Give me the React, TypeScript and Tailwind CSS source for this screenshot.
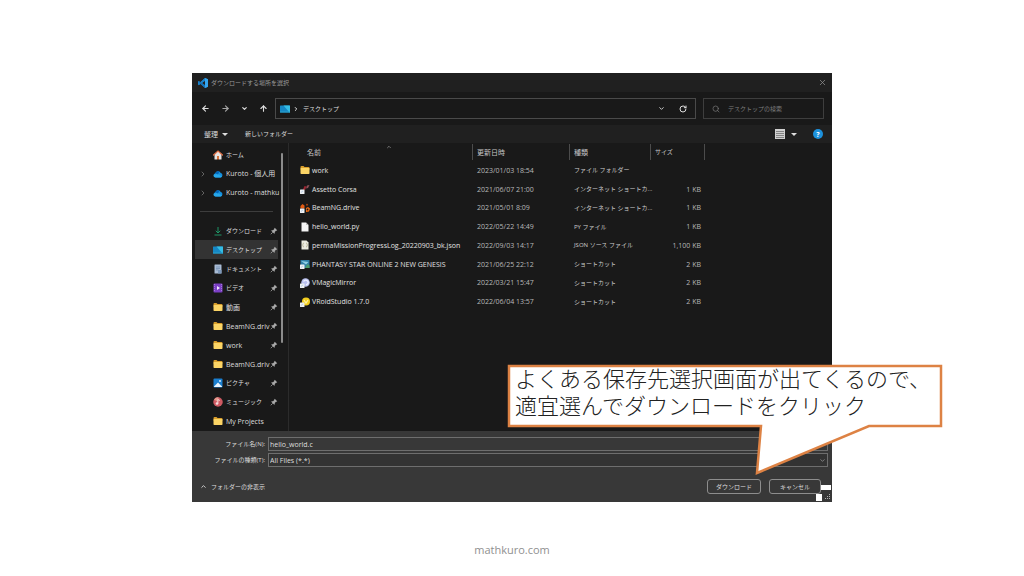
import { ReactNode } from 'react';
import {
  ArrowLeft,
  ArrowRight,
  ArrowUp,
  ChevronDown,
  ChevronRight,
  ChevronUp,
  RotateCw,
  Search,
  X,
} from 'lucide-react';

/* ---------- Icons ---------- */

function Svg({ children }: { children: ReactNode }) {
  return (
    <svg viewBox="0 0 20 20" className="size-[10px] shrink-0" aria-hidden="true">
      {children}
    </svg>
  );
}

const FolderIcon = () => (
  <Svg>
    <path d="M1 4q0-2 2-2h4l2 2h8q2 0 2 2v3H1z" fill="#d99e2b" />
    <rect x="1" y="6" width="18" height="12" rx="1.5" fill="#fbd465" />
  </Svg>
);

const HomeIcon = () => (
  <Svg>
    <path d="M3 9l7-7 7 7v10h-5v-6H8v6H3z" fill="#e8e4e2" />
    <path d="M8 12h4v7H8z" fill="#d9733c" />
    <path d="M1 10l9-8 9 8" fill="none" stroke="#e2734a" strokeWidth="2.4" strokeLinecap="round" />
  </Svg>
);

const CloudIcon = () => (
  <Svg>
    <path d="M5 17a4.500 4.500 0 0 1-.5-8.500A6 6 0 0 1 15.500 8 4.600 4.600 0 0 1 15 17z" fill="#1490df" />
    <path d="M5 17a4.500 4.500 0 0 1-3.500-6L10 10l8 5q-1 2-3 2z" fill="#28a8ea" />
    <path d="M4.500 8.500A6 6 0 0 1 13 5l-3 6z" fill="#0364b8" />
  </Svg>
);

const DownloadIcon = () => (
  <Svg>
    <path d="M10 2v12M5.500 9.500L10 14l4.500-4.500M3 18h14" fill="none" stroke="#1fa36f" strokeWidth="1.8" />
  </Svg>
);

const DesktopIcon = () => (
  <Svg>
    <rect x="0" y="3" width="20" height="14" rx="1" fill="#1687c4" />
    <path d="M7 3h12q1 0 1 1v12q0 1-1 1z" fill="#35bde4" />
    <path d="M0 15h20v1q0 1-1 1H1q-1 0-1-1z" fill="#2aa1cc" />
  </Svg>
);

const DocumentIcon = () => (
  <Svg>
    <rect x="3" y="1" width="14" height="18" rx="1" fill="#a9bcd4" />
    <path d="M6 6h8M6 9h8M6 12h5" stroke="#6f8bb0" strokeWidth="1.4" />
    <rect x="10" y="12" width="7" height="7" fill="#7d98ba" />
  </Svg>
);

const VideoIcon = () => (
  <Svg>
    <rect x="1" y="1" width="18" height="18" rx="2" fill="#7b3fc4" />
    <path d="M3 2v16M17 2v16" stroke="#b58be6" strokeWidth="1.5" strokeDasharray="2 2" />
    <path d="M8 6l6 4-6 4z" fill="#f1e6ff" />
  </Svg>
);

const PictureIcon = () => (
  <Svg>
    <rect x="1" y="1" width="18" height="18" rx="2" fill="#1a7fd0" />
    <path d="M2 17l8-8 8 8v1H2z" fill="#e9f5ff" />
    <circle cx="14" cy="6" r="1.8" fill="#e9f5ff" />
  </Svg>
);

const MusicIcon = () => (
  <Svg>
    <circle cx="10" cy="10" r="9.500" fill="#cf5a63" />
    <path d="M10 10L2 5a9.500 9.500 0 0 1 9-4.500z" fill="#e59a8d" />
    <circle cx="8" cy="13" r="2.600" fill="#f5dcdc" />
    <path d="M9.800 13V5l4 2" fill="none" stroke="#f5dcdc" strokeWidth="1.8" />
  </Svg>
);

const ShortcutBadge = () => (
  <>
    <rect x="0" y="11" width="9" height="9" rx="1" fill="#eef1f4" />
    <path d="M2.500 17.500q0-3 4-3.500" fill="none" stroke="#9dbbdc" strokeWidth="1.3" />
  </>
);

const AssettoIcon = () => (
  <Svg>
    <path d="M6 11l3-7 4 1-3 7z" fill="#9b2430" />
    <path d="M12 9l2-6 5-1-3 6z" fill="#8d5158" />
    <ShortcutBadge />
  </Svg>
);

const BeamIcon = () => (
  <Svg>
    <path d="M1 6l4-4 4 3v6H1z" fill="#e25b12" />
    <circle cx="14" cy="3.500" r="2" fill="#9c3f12" />
    <path d="M12 10l4-2 4 3-2 6-6 1z" fill="#f06a12" />
    <circle cx="15" cy="13" r="1.800" fill="#191919" />
    <ShortcutBadge />
  </Svg>
);

const FileIcon = () => (
  <Svg>
    <path d="M3 1h9l5 5v13H3z" fill="#f4f4f4" />
    <path d="M12 1v5h5z" fill="#bdbdbd" />
  </Svg>
);

const JsonIcon = () => (
  <Svg>
    <path d="M3 1h10l4 4v14H3z" fill="#ecebe0" />
    <path d="M8 6q-2 0-2 2 0 2-1 2 1 0 1 2t2 2M12 6q2 0 2 2 0 2 1 2-1 0-1 2t-2 2" fill="none" stroke="#a8a483" strokeWidth="1.5" />
  </Svg>
);

const PhantasyIcon = () => (
  <Svg>
    <rect x="1" y="2" width="18" height="16" fill="#2f7fa8" />
    <path d="M2 4l15 2-5 5z" fill="#8fd0e6" />
    <path d="M10 18l5-8 4 3v5z" fill="#4d9c6b" />
    <ShortcutBadge />
  </Svg>
);

const MirrorIcon = () => (
  <Svg>
    <circle cx="11" cy="9" r="8.500" fill="#b9c0ee" />
    <path d="M7 7q4-5 8-1t-3 8" fill="none" stroke="#eef0ff" strokeWidth="2.500" />
    <ShortcutBadge />
  </Svg>
);

const VroidIcon = () => (
  <Svg>
    <circle cx="12" cy="9" r="8" fill="#f4cf1f" />
    <path d="M8 6l4 6 4-6" fill="none" stroke="#fff3a8" strokeWidth="2.500" />
    <ShortcutBadge />
  </Svg>
);

const PinIcon = () => (
  <svg viewBox="0 0 16 16" className="size-2 shrink-0" aria-hidden="true">
    <path d="M9.500 1.500l5 5-1.500 1-1 0-2.500 2.500 0 2.500-1 1L2.500 7.500l1-1H6L8.500 4V3z" fill="#a9a9a9" />
    <path d="M5.500 10.500L1.500 14.500" stroke="#a9a9a9" strokeWidth="1.5" />
  </svg>
);

const CodeLogo = () => (
  <Svg>
    <path d="M14 0l6 2.500v15L14 20 4.500 11.500 1.500 14 0 13V7l1.500-1 3 2.500z" fill="#1b82cb" />
    <path d="M14 5.500v9L8 10z" fill="#202020" />
    <path d="M14 0L0 13l1.500 1.300L14 5.500z" fill="#1b82cb" />
    <path d="M1.500 5.800L0 7l14 13v-5.500z" fill="#1572b8" />
    <path d="M14 0l6 2.500v15L14 20z" fill="#35a5ee" />
  </Svg>
);

/* ---------- Data ---------- */

type Place = {
  label: string;
  icon: ReactNode;
  pinned?: boolean;
  expandable?: boolean;
  selected?: boolean;
  kana?: boolean;
};

const topPlaces: Place[] = [
  { label: 'ホーム', icon: <HomeIcon />, kana: true },
  { label: 'Kuroto - 個人用', icon: <CloudIcon />, expandable: true },
  { label: 'Kuroto - mathku', icon: <CloudIcon />, expandable: true },
];

const pinnedPlaces: Place[] = [
  { label: 'ダウンロード', icon: <DownloadIcon />, pinned: true, kana: true },
  { label: 'デスクトップ', icon: <DesktopIcon />, pinned: true, selected: true, kana: true },
  { label: 'ドキュメント', icon: <DocumentIcon />, pinned: true, kana: true },
  { label: 'ビデオ', icon: <VideoIcon />, pinned: true, kana: true },
  { label: '動画', icon: <FolderIcon />, pinned: true },
  { label: 'BeamNG.driv', icon: <FolderIcon />, pinned: true },
  { label: 'work', icon: <FolderIcon />, pinned: true },
  { label: 'BeamNG.driv', icon: <FolderIcon />, pinned: true },
  { label: 'ピクチャ', icon: <PictureIcon />, pinned: true, kana: true },
  { label: 'ミュージック', icon: <MusicIcon />, pinned: true, kana: true },
  { label: 'My Projects', icon: <FolderIcon /> },
];

const files = [
  { name: 'work', icon: <FolderIcon />, date: '2023/01/03 18:54', type: 'ファイル フォルダー', size: '' },
  { name: 'Assetto Corsa', icon: <AssettoIcon />, date: '2021/06/07 21:00', type: 'インターネット ショートカ...', size: '1 KB' },
  { name: 'BeamNG.drive', icon: <BeamIcon />, date: '2021/05/01 8:09', type: 'インターネット ショートカ...', size: '1 KB' },
  { name: 'hello_world.py', icon: <FileIcon />, date: '2022/05/22 14:49', type: 'PY ファイル', size: '1 KB' },
  { name: 'permaMissionProgressLog_20220903_bk.json', icon: <JsonIcon />, date: '2022/09/03 14:17', type: 'JSON ソース ファイル', size: '1,100 KB' },
  { name: 'PHANTASY STAR ONLINE 2 NEW GENESIS', icon: <PhantasyIcon />, date: '2021/06/25 22:12', type: 'ショートカット', size: '2 KB' },
  { name: 'VMagicMirror', icon: <MirrorIcon />, date: '2022/03/21 15:47', type: 'ショートカット', size: '2 KB' },
  { name: 'VRoidStudio 1.7.0', icon: <VroidIcon />, date: '2022/06/04 13:57', type: 'ショートカット', size: '2 KB' },
];

/* ---------- Sections ---------- */

function PlaceItem({ label, icon, pinned, expandable, selected, kana }: Place) {
  return (
    <li className="flex min-h-0 flex-1">
      <button
        className={`flex w-full items-center pl-2 text-left ${selected ? 'bg-[#333333]' : ''}`}
      >
        <span className="w-[10px] shrink-0">
          {expandable && <ChevronRight className="-ml-1 size-2 text-[#8a8a8a]" />}
        </span>
        {icon}
        <span
          className={`ml-[3px] flex-1 whitespace-nowrap ${kana ? 'text-[6px]' : 'text-[7px]'}`}
        >
          {label}
        </span>
        {pinned && <PinIcon />}
      </button>
    </li>
  );
}

function Sidebar() {
  return (
    <aside className="flex w-[97px] shrink-0 border-r border-[#2b2b2b] pl-[3px]">
      <ul className="flex w-[83px] shrink-0 flex-col pt-[2px]">
        {topPlaces.map((place) => (
          <PlaceItem key={place.label} {...place} />
        ))}
        <li className="flex min-h-0 flex-1 items-center px-[5px]">
          <hr className="w-full border-[#3d3d3d]" />
        </li>
        {pinnedPlaces.map((place, i) => (
          <PlaceItem key={i} {...place} />
        ))}
      </ul>
      <div className="mt-[10px] ml-[3px] h-[190px] w-[2px] rounded-full bg-[#8c8c8c]" />
    </aside>
  );
}

function FileTable() {
  return (
    <div className="min-w-0 flex-1">
      <table className="h-[168px] w-full table-fixed border-collapse text-left whitespace-nowrap">
        <colgroup>
          <col className="w-[184px]" />
          <col className="w-[97px]" />
          <col className="w-[81px]" />
          <col className="w-[54px]" />
          <col />
        </colgroup>
        <thead className="text-[7px] text-[#c4c4c4]">
          <tr className="h-[18px]">
            <th className="p-0 font-normal">
              <div className="flex h-4 items-center border-r border-[#4c4c4c] pl-[18px]">
                <span className="flex-1">名前</span>
                <ChevronUp className="mr-20 size-[6px] self-start" />
              </div>
            </th>
            <th className="p-0 font-normal">
              <div className="flex h-4 items-center border-r border-[#4c4c4c] pl-1">更新日時</div>
            </th>
            <th className="p-0 font-normal">
              <div className="flex h-4 items-center border-r border-[#4c4c4c] pl-1">種類</div>
            </th>
            <th className="p-0 font-normal">
              <div className="flex h-4 items-center border-r border-[#4c4c4c] pl-1 text-[6px]">サイズ</div>
            </th>
            <th className="p-0" />
          </tr>
        </thead>
        <tbody className="text-[7px] text-[#b8b8b8]">
          {files.map((file) => (
            <tr key={file.name}>
              <td className="p-0 text-[#e2e2e2]">
                <div className="flex items-center gap-[2px] pl-[11px]">
                  {file.icon}
                  <span>{file.name}</span>
                </div>
              </td>
              <td className="p-0 pl-1">{file.date}</td>
              <td className="p-0 pl-1 text-[6px] text-[#cccccc]">{file.type}</td>
              <td className="p-0 pr-1 text-right">{file.size}</td>
              <td className="p-0" />
            </tr>
          ))}
        </tbody>
      </table>
    </div>
  );
}

function Callout() {
  return (
    <div className="absolute top-[291px] left-[315px] w-[436px]">
      <svg viewBox="0 0 436 112" className="block w-full" aria-hidden="true">
        <path
          d="M2 2H434V62H362L250 109L254 62H2Z"
          fill="#ffffff"
          stroke="#dd8244"
          strokeWidth="2.5"
          strokeLinejoin="miter"
        />
      </svg>
      <p className="absolute top-px left-2 text-[22px] leading-[27px] font-light whitespace-nowrap text-[#222222]">
        よくある保存先選択画面が出てくるので、
        <br />
        適宜選んでダウンロードをクリック
      </p>
    </div>
  );
}

export default function App() {
  return (
    <div className="flex min-h-screen flex-col items-center bg-white px-4 pt-[73px] font-['Open_Sans','Noto_Sans_CJK_JP',sans-serif] leading-none">
      <main className="relative w-full max-w-[640px] bg-[#191919] text-[7px] text-[#dedede]">
        {/* Title bar */}
        <header className="flex h-[19px] items-center bg-[#202020] pr-[5px] pl-[6px]">
          <CodeLogo />
          <h1 className="ml-[3px] flex-1 text-[6px] text-[#9a9a9a]">ダウンロードする場所を選択</h1>
          <button aria-label="閉じる">
            <X className="size-[9px] text-[#8f8f8f]" strokeWidth={2} />
          </button>
        </header>

        {/* Navigation */}
        <div className="flex h-[33px] items-center pr-2 pl-[9px]">
          <nav className="flex w-[74px] items-center gap-[11px]">
            <button aria-label="戻る">
              <ArrowLeft className="size-[9px]" strokeWidth={3} />
            </button>
            <button aria-label="進む">
              <ArrowRight className="size-[9px] text-[#a5a5a5]" strokeWidth={3} />
            </button>
            <button aria-label="履歴">
              <ChevronDown className="size-[7px]" strokeWidth={4} />
            </button>
            <button aria-label="上へ">
              <ArrowUp className="size-[9px]" strokeWidth={3} />
            </button>
          </nav>
          <div className="flex h-[21px] flex-1 items-center border border-[#4a4a4a] pr-2 pl-1">
            <DesktopIcon />
            <ChevronRight className="ml-[3px] size-[6px]" strokeWidth={4} />
            <button className="ml-1 text-[6px]">デスクトップ</button>
            <button className="ml-auto" aria-label="以前の場所">
              <ChevronDown className="size-[7px]" strokeWidth={3} />
            </button>
            <button className="ml-[14px]" aria-label="更新">
              <RotateCw className="size-2" strokeWidth={3} />
            </button>
          </div>
          <label className="ml-[7px] flex h-[21px] w-[121px] items-center border border-[#3e3e3e] pl-2">
            <Search className="size-2 shrink-0 text-[#7d7d7d]" strokeWidth={2} />
            <input
              className="ml-2 w-full min-w-0 bg-transparent text-[6px] outline-none placeholder:text-[#7d7d7d]"
              placeholder="デスクトップの検索"
              aria-label="デスクトップの検索"
            />
          </label>
        </div>

        {/* Toolbar */}
        <div className="flex h-[18px] items-center bg-[#202020] pr-[9px] pl-3">
          <button className="flex items-center gap-1">
            整理
            <span className="border-x-[3px] border-t-[3px] border-x-transparent border-t-[#dedede]" />
          </button>
          <button className="ml-[17px] text-[6px]">新しいフォルダー</button>
          <button className="ml-auto flex items-center gap-[6px]" aria-label="表示方法">
            <Svg>
              <rect x="0" y="0" width="20" height="20" fill="#d0d0d0" />
              <path d="M2 5h16M2 9h16M2 13h16M2 17h16" stroke="#6b6b6b" strokeWidth="1.5" />
            </Svg>
            <span className="border-x-[3px] border-t-[3px] border-x-transparent border-t-[#dedede]" />
          </button>
          <button
            className="ml-4 flex size-[10px] items-center justify-center rounded-full bg-[#1c91dc] text-[7px] font-bold text-white"
            aria-label="ヘルプ"
          >
            ?
          </button>
        </div>

        <div className="flex h-72">
          <Sidebar />
          <FileTable />
        </div>

        {/* File name, type and actions */}
        <footer className="bg-[#383838] pt-[6px] pr-1 pb-2 pl-2">
          <div className="grid grid-cols-[65px_1fr] items-center gap-x-[3px] gap-y-[2px]">
            <label htmlFor="file-name" className="text-right text-[6px]">
              ファイル名(N):
            </label>
            <input
              id="file-name"
              defaultValue="hello_world.c"
              className="h-[14px] w-full border border-[#6e6e6e] bg-[#383838] px-px text-[7px] outline-none"
            />
            <label htmlFor="file-type" className="text-right text-[6px]">
              ファイルの種類(T):
            </label>
            <div className="relative flex">
              <select
                id="file-type"
                className="h-[14px] w-full appearance-none border border-[#6e6e6e] bg-[#333333] px-px text-[7px] outline-none"
              >
                <option>All Files (*.*)</option>
              </select>
              <ChevronDown className="pointer-events-none absolute top-1 right-[2px] size-[7px] text-[#b0b0b0]" />
            </div>
          </div>
          <div className="mt-3 flex items-center pr-[7px]">
            <button className="flex items-center gap-1 text-[6px]">
              <ChevronUp className="size-[7px]" strokeWidth={3} />
              フォルダーの非表示
            </button>
            <button className="mr-2 ml-auto h-[15px] w-[54px] rounded-[3px] border border-[#8d8d8d] text-[6px]">
              ダウンロード
            </button>
            <button className="h-[15px] w-[52px] rounded-[3px] border border-[#8d8d8d] text-[6px]">
              キャンセル
            </button>
          </div>
        </footer>

        {/* Resize grip */}
        <div className="absolute right-px bottom-px flex flex-col items-end">
          <span className="h-[5px] w-[10px] bg-white" />
          <span className="mt-[3px] flex items-end gap-[2px]">
            <span className="h-[7px] w-[6px] bg-white" />
            <svg viewBox="0 0 7 8" className="h-2 w-[7px]" fill="#b0b0b0" aria-hidden="true">
              <path d="M5 1h1v1h-1zM3 3h1v1h-1zM5 3h1v1h-1zM1 5h1v1h-1zM3 5h1v1h-1zM5 5h1v1h-1z" />
            </svg>
          </span>
        </div>

        <Callout />
      </main>

      <a
        href="#"
        className="mt-[42px] font-['Open_Sans','Liberation_Sans',sans-serif] text-[11px] text-[#909090]"
      >
        mathkuro.com
      </a>
    </div>
  );
}
